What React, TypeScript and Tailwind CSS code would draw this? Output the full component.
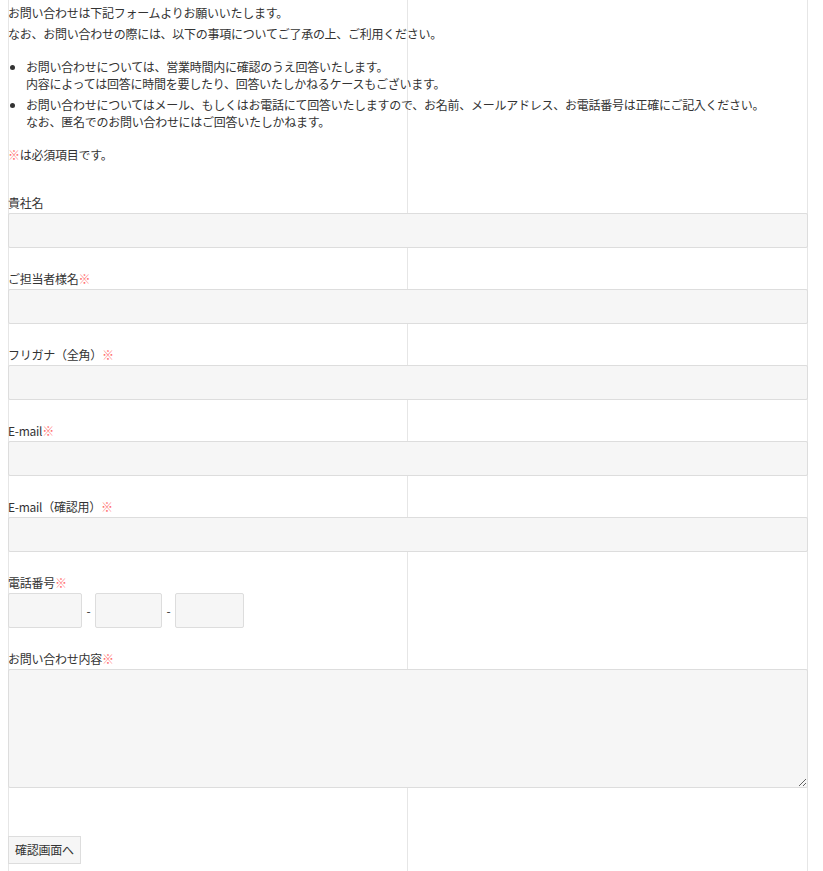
const Req = () => <span className="text-[#ff6f6f]">※</span>

const inputCls =
  'block h-[35px] border border-[#dddddd] bg-[#f6f6f6] rounded-[2px] outline-none'

function Field({ label, required, children }: { label: string; required?: boolean; children: React.ReactNode }) {
  return (
    <div className="mt-[22px] first:mt-0">
      <div className="h-[17px]">
        {label}
        {required && <Req />}
      </div>
      <div className="mt-[2px]">{children}</div>
    </div>
  )
}

export default function App() {
  return (
    <div
      className="relative min-h-screen bg-white text-[#333333] text-[12px] leading-[17px] tracking-[-0.26px]"
      style={{ fontFamily: '"Noto Sans CJK JP", "Noto Sans", sans-serif' }}
    >
      {/* guide lines behind the form */}
      <div className="absolute top-0 bottom-0 left-[8px] w-px bg-[#e6e6e6]" />
      <div className="absolute top-0 bottom-0 left-[407px] w-px bg-[#e6e6e6]" />
      <div className="absolute top-0 bottom-0 left-[807px] w-px bg-[#e6e6e6]" />

      <div className="relative w-[800px] ml-[8px] pt-[4px] pb-[40px]">
        <p>お問い合わせは下記フォームよりお願いいたします。</p>
        <p className="mt-[4px]">なお、お問い合わせの際には、以下の事項についてご了承の上、ご利用ください。</p>

        <ul className="mt-[16px] list-disc pl-[18px] flex flex-col gap-[4px]">
          <li>
            お問い合わせについては、営業時間内に確認のうえ回答いたします。
            <br />
            内容によっては回答に時間を要したり、回答いたしかねるケースもございます。
          </li>
          <li>
            お問い合わせについてはメール、もしくはお電話にて回答いたしますので、お名前、メールアドレス、お電話番号は正確にご記入ください。
            <br />
            なお、匿名でのお問い合わせにはご回答いたしかねます。
          </li>
        </ul>

        <p className="mt-[16px]">
          <Req />
          は必須項目です。
        </p>

        <form className="mt-[31px]">
          <Field label="貴社名">
            <input className={`${inputCls} w-full`} />
          </Field>
          <Field label="ご担当者様名" required>
            <input className={`${inputCls} w-full`} />
          </Field>
          <Field label="フリガナ（全角）" required>
            <input className={`${inputCls} w-full`} />
          </Field>
          <Field label="E-mail" required>
            <input className={`${inputCls} w-full`} />
          </Field>
          <Field label="E-mail（確認用）" required>
            <input className={`${inputCls} w-full`} />
          </Field>
          <Field label="電話番号" required>
            <div className="flex items-center">
              <input className={`${inputCls} w-[74px]`} />
              <span className="w-[13px] text-center">-</span>
              <input className={`${inputCls} w-[67px]`} />
              <span className="w-[13px] text-center">-</span>
              <input className={`${inputCls} w-[69px]`} />
            </div>
          </Field>
          <Field label="お問い合わせ内容" required>
            <textarea className="block w-full h-[119px] border border-[#dddddd] bg-[#f6f6f6] rounded-[2px] outline-none" />
          </Field>

          <button
            type="button"
            className="mt-[48px] block h-[28px] px-[6px] leading-[26px] border border-[#dddddd] bg-[#f6f6f6] text-[#333333] text-[12px]"
          >
            確認画面へ
          </button>
        </form>
      </div>
    </div>
  )
}
